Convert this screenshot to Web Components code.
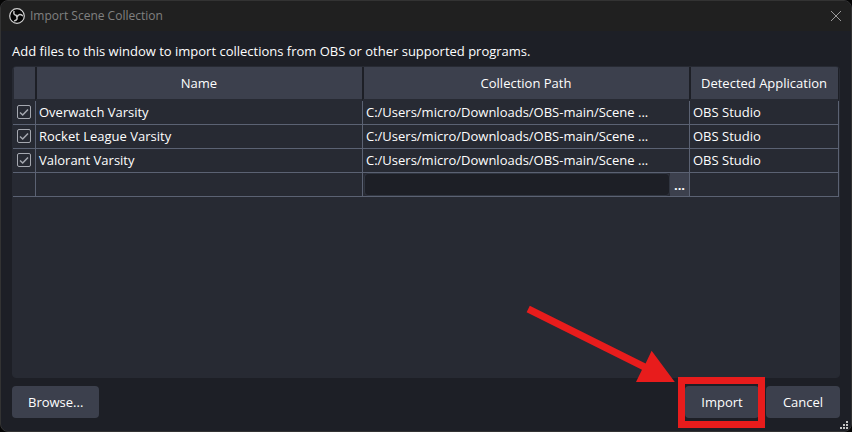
<!DOCTYPE html>
<html lang="en">
<head>
<meta charset="utf-8">
<title>Import Scene Collection</title>
<style>
html, body { height: 100%; }
body { margin: 0; background: #050505; font: 13px/18px "Open Sans", "Noto Sans", sans-serif; color: #fefefe; }
</style>
</head>
<body>
<dialog-window heading="Import Scene Collection">
  <span slot="hint">Add files to this window to import collections from OBS or other supported programs.</span>
  <collection-table></collection-table>
  <push-button slot="start">Browse...</push-button>
  <call-out slot="end"><push-button>Import</push-button></call-out>
  <push-button slot="end">Cancel</push-button>
</dialog-window>

<script>
const define = (name, html, setup) => customElements.define(name, class extends HTMLElement {
  constructor() {
    super();
    this.attachShadow({ mode: 'open' }).innerHTML = html;
  }
  connectedCallback() { if (setup) setup(this, this.shadowRoot); }
});

define('push-button', `
<style>
:host { display: block; }
button { display: block; width: 100%; min-width: 74px; height: 32px; padding: 0 16px; border: 0; border-radius: 4px; background: #3c404d; color: inherit; font: inherit; }
button:hover { background: #4a4f5e; }
</style>
<button type="button"><slot></slot></button>`);

define('call-out', `
<style>
:host { display: block; position: relative; }
.box { position: absolute; inset: -9px -6px -10px -7px; border: 7px solid #e81c1c; pointer-events: none; }
svg { position: absolute; right: 83px; bottom: 34px; pointer-events: none; }
</style>
<slot></slot>
<div class="box"></div>
<svg width="150" height="80" viewBox="527 304 150 80" aria-hidden="true">
  <path fill="#e81c1c" d="M530.8 305.7 646.6 363.6 652.6 350.8 675.8 381.9H637L643 369.8 527.6 312.2Z"/>
</svg>`);

define('collection-table', `
<style>
:host { display: block; flex: 1; min-height: 0; box-sizing: border-box; border: 1px solid #272a33; border-radius: 4px; background: #272a33; overflow: hidden; }
table { width: 100%; table-layout: fixed; border-collapse: separate; border-spacing: 0; }
.check { width: 23px; }
.app { width: 149px; }
th { box-sizing: border-box; height: 34px; padding: 0; border-bottom: 2px solid #272a33; font-weight: 400; text-align: center; background: #3c404d; background-clip: padding-box; box-shadow: inset 1px 0 #1d1f26; border-right: 1px solid #1d1f26; }
th:first-child { box-shadow: inset 1px 0 #272a33; }
td { box-sizing: border-box; height: 24px; padding: 0 3px 2px; border: solid #5b6273; border-width: 0 1px 1px 0; white-space: nowrap; overflow: hidden; text-overflow: ellipsis; }
td:first-child { text-overflow: clip; }
td.edit { padding: 0 0 0 1px; }
input[type=checkbox] { appearance: none; display: block; box-sizing: border-box; width: 14px; height: 14px; margin: 0 0 0 1px; border: 1px solid #a5a8b0; border-radius: 2px; background: no-repeat center/12px; }
input:checked { background-image: url("data:image/svg+xml,%3Csvg xmlns='http://www.w3.org/2000/svg' viewBox='0 0 12 12'%3E%3Cpath d='M2 6.500 4.700 9 10 3.500' fill='none' stroke='%23a5a8b0' stroke-width='1.5'/%3E%3C/svg%3E"); }
.path { display: flex; height: 23px; }
input[type=text] { flex: 1; min-width: 0; box-sizing: border-box; padding: 0 4px; border: 1px solid #303540; border-radius: 4px; background: #1d1f26; color: inherit; font: inherit; }
button { width: 19px; padding: 0; border: 0; background: #3c404d; color: inherit; font: inherit; font-weight: 700; }
</style>
<table>
  <colgroup><col class="check"><col><col><col class="app"></colgroup>
  <thead><tr><th></th><th>Name</th><th>Collection Path</th><th>Detected Application</th></tr></thead>
  <tbody></tbody>
</table>`, (host, root) => {
  const row = name => `<tr><td><input type="checkbox" checked aria-label="${name}"></td><td>${name}</td><td>C:/Users/micro/Downloads/OBS-main/Scene ...</td><td>OBS Studio</td></tr>`;
  root.querySelector('tbody').innerHTML =
    ['Overwatch Varsity', 'Rocket League Varsity', 'Valorant Varsity'].map(row).join('') +
    `<tr><td></td><td></td><td class="edit"><div class="path"><input type="text" aria-label="Collection Path"><button type="button" aria-label="Choose file">...</button></div></td><td></td></tr>`;
});

define('dialog-window', `
<style>
:host { display: flex; flex-direction: column; box-sizing: border-box; height: 100%; position: relative; border: 1px solid #333333; border-radius: 8px; background: #1d1f26; overflow: hidden; }
header { display: flex; align-items: center; gap: 5px; height: 30px; flex: none; padding: 0 9px 0 8px; background: #202020; color: #808080; font-size: 12px; }
h1 { flex: 1; margin: 0; font: inherit; }
header svg { display: block; }
header button { display: block; padding: 0; border: 0; background: none; color: #9b9b9b; }
main { display: flex; flex: 1; min-height: 0; flex-direction: column; padding: 11px 11px 13px; }
.hint { margin: 0 0 6px; }
footer { display: flex; justify-content: space-between; margin-top: 8px; }
.end { display: flex; gap: 7px; }
.grip { position: absolute; right: 3px; bottom: 2px; }
</style>
<header>
  <svg width="16" height="16" viewBox="0 0 16 16" aria-hidden="true">
    <circle cx="8" cy="8" r="7.3" fill="#050505" stroke="#d0d0d0" stroke-width="1.2"/>
    <g fill="none" stroke="#c8c8c8" stroke-width="1.5" stroke-linecap="round">
      <path d="M8 7.500C5.500 7.500 4.300 5.800 5 3.600"/>
      <path d="M8 7.500C5.500 7.500 4.300 5.800 5 3.600" transform="rotate(120 8 8)"/>
      <path d="M8 7.500C5.500 7.500 4.300 5.800 5 3.600" transform="rotate(240 8 8)"/>
    </g>
  </svg>
  <h1></h1>
  <button type="button" aria-label="Close"><svg width="12" height="12" viewBox="0 0 12 12"><path d="M1 1 11 11M11 1 1 11" stroke="currentColor"/></svg></button>
</header>
<main>
  <p class="hint"><slot name="hint"></slot></p>
  <slot></slot>
  <footer><slot name="start"></slot><div class="end"><slot name="end"></slot></div></footer>
</main>
<svg class="grip" width="8" height="8" viewBox="0 0 8 8" aria-hidden="true"><path fill="#c4c4c4" d="M6 0h2v2H6zM3 3h2v2H3zM6 3h2v2H6zM0 6h2v2H0zM3 6h2v2H3zM6 6h2v2H6z"/></svg>`,
(host, root) => { root.querySelector('h1').textContent = host.getAttribute('heading'); });
</script>
</body>
</html>
